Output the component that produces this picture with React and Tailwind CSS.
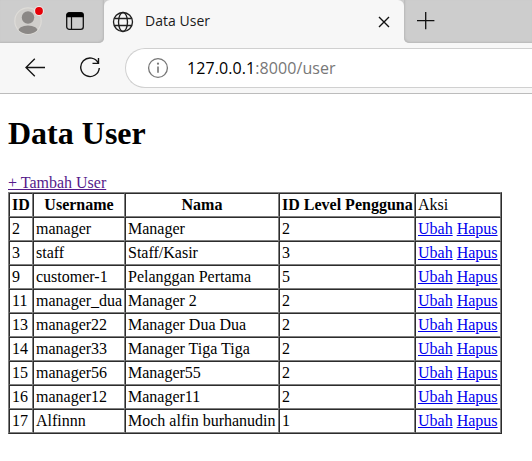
const USERS = [
  [2, 'manager', 'Manager', 2],
  [3, 'staff', 'Staff/Kasir', 3],
  [9, 'customer-1', 'Pelanggan Pertama', 5],
  [11, 'manager_dua', 'Manager 2', 2],
  [13, 'manager22', 'Manager Dua Dua', 2],
  [14, 'manager33', 'Manager Tiga Tiga', 2],
  [15, 'manager56', 'Manager55', 2],
  [16, 'manager12', 'Manager11', 2],
  [17, 'Alfinnn', 'Moch alfin burhanudin', 1],
];

const CELL = 'h-6 whitespace-nowrap border border-[gray] [border-style:inset] p-[2px]';

function TabStrip() {
  return (
    <div className="flex h-[43px] bg-[linear-gradient(#cdcdcd_50%,#f7f7f7_50%)]">
      <div className="flex h-full w-[104px] items-start rounded-br-[5px] bg-[#cdcdcd] shadow-[inset_-1px_-1px_2px_#b8b8b8]">
        <svg className="ml-[13px] mt-[5px]" width="32" height="32" viewBox="0 0 32 32">
          <defs>
            <clipPath id="avatar">
              <circle cx="15" cy="16" r="13" />
            </clipPath>
          </defs>
          <circle cx="15" cy="16" r="13.2" fill="#d0cecb" stroke="#dedcd8" strokeWidth="1.2" />
          <g fill="#8b8886" clipPath="url(#avatar)">
            <circle cx="15" cy="12.5" r="6.2" />
            <ellipse cx="15" cy="27" rx="10.3" ry="6.6" />
          </g>
          <circle cx="26" cy="6" r="4.9" fill="#eeeae8" />
          <circle cx="26" cy="6" r="3.9" fill="#e60008" />
        </svg>
        <svg className="ml-[20px] mt-[11px]" width="20" height="20" viewBox="0 0 20 20" fill="none" stroke="#111">
          <rect x="1.7" y="1.7" width="16.6" height="16.6" rx="2.6" strokeWidth="1.3" />
          <path d="M1.500 6.300V4a2.500 2.500 0 0 1 2.500-2.500h12A2.500 2.500 0 0 1 18.500 4v2.300z" fill="#000" stroke="none" />
          <path d="M6.500 6v12" strokeWidth="1.2" />
        </svg>
      </div>
      <div className="flex h-[44px] w-[300px] items-start rounded-t-[6px] bg-[#f7f7f7]">
        <svg className="ml-[8px] mt-[11px]" width="22" height="22" viewBox="0 0 22 22" fill="none" stroke="#202020" strokeWidth="1.35">
          <circle cx="11" cy="11" r="9.5" />
          <ellipse cx="11" cy="11" rx="4.500" ry="9.500" />
          <path d="M2.200 7.500h17.600M2.200 14.500h17.600" />
        </svg>
        <span className="ml-[11px] mt-[11px] w-[68px] whitespace-nowrap text-[14px] leading-[20px] tracking-[0.03px] text-[#1b1b1b]">
          Data User
        </span>
        <svg className="ml-auto mr-[14px] mt-[16px]" width="12" height="12" viewBox="0 0 12 12" stroke="#111" strokeWidth="1.4">
          <path d="M1 1l10 10M11 1L1 11" />
        </svg>
      </div>
      <div className="flex h-full flex-1 rounded-bl-[5px] bg-[#cdcdcd] shadow-[inset_1px_-1px_2px_#b8b8b8]">
        <svg className="ml-[12px] mt-[11px]" width="20" height="20" viewBox="0 0 20 20" stroke="#111" strokeWidth="1.3">
          <path d="M1 9.600h17.400M9.700 1v17.200" />
        </svg>
      </div>
    </div>
  );
}

function Toolbar() {
  return (
    <div className="flex h-[51px] items-start border-b border-[#bcbcbc]">
      <svg className="ml-[24px] mt-[14px]" width="22" height="20" viewBox="0 0 22 20" fill="none" stroke="#151515" strokeWidth="1.35">
        <path d="M21 10.500H2M10.800 1.800L2 10.500l8.800 8.700" />
      </svg>
      <svg className="ml-[33px] mt-[14px]" width="22" height="22" viewBox="0 0 22 22" fill="none" stroke="#151515" strokeWidth="1.4">
        <path d="M19.400 6.200A9.300 9.300 0 1 0 20.300 11M19.500 1v5.400h-6" />
      </svg>
      <div className="ml-[24px] mt-[5px] flex h-[40px] flex-1 items-center rounded-l-full border border-r-0 border-[#d0d0d0] bg-white">
        <svg className="ml-[21px]" width="22" height="22" viewBox="0 0 22 22" fill="none" stroke="#767676" strokeWidth="1.3">
          <circle cx="11" cy="11" r="9.400" />
          <path d="M11 9.400v6.300" strokeWidth="1.600" />
          <circle cx="11" cy="6.700" r="1.100" fill="#767676" stroke="none" />
        </svg>
        <span className="ml-[18px] whitespace-nowrap text-[16px] tracking-[0.08px] text-[#777]">
          <span className="text-black">127.0.0.1</span>:8000/user
        </span>
      </div>
    </div>
  );
}

export default function App() {
  return (
    <div className="h-[461px] w-[532px] overflow-hidden bg-white">
      <header className="h-[94px] bg-[#f7f7f7] font-['Open_Sans','Noto_Sans',sans-serif]">
        <TabStrip />
        <Toolbar />
      </header>
      <main className="px-2 pt-[21px] font-['Liberation_Serif',serif] text-[16px] leading-[18px] text-black">
        <h1 className="mb-[22px] text-[32px] font-bold leading-[37px]">Data User</h1>
        <a className="block h-[18px] w-fit text-[#551a8b] underline">+ Tambah User</a>
        <table className="w-[494px] table-fixed border-separate border-spacing-0 border border-[gray] [border-style:outset]">
          <colgroup>
            <col className="w-[24px]" />
            <col className="w-[92px]" />
            <col className="w-[154px]" />
            <col className="w-[136px]" />
            <col className="w-[86px]" />
          </colgroup>
          <tbody>
            <tr>
              {['ID', 'Username', 'Nama', 'ID Level Pengguna'].map((label) => (
                <th key={label} className={`${CELL} text-center font-bold`}>{label}</th>
              ))}
              <td className={CELL}>Aksi</td>
            </tr>
            {USERS.map((user) => (
              <tr key={user[0]}>
                {user.map((value, i) => (
                  <td key={i} className={CELL}>{value}</td>
                ))}
                <td className={CELL}>
                  <a className="text-[#0000ee] underline">Ubah</a> <a className="text-[#0000ee] underline">Hapus</a>
                </td>
              </tr>
            ))}
          </tbody>
        </table>
      </main>
    </div>
  );
}
